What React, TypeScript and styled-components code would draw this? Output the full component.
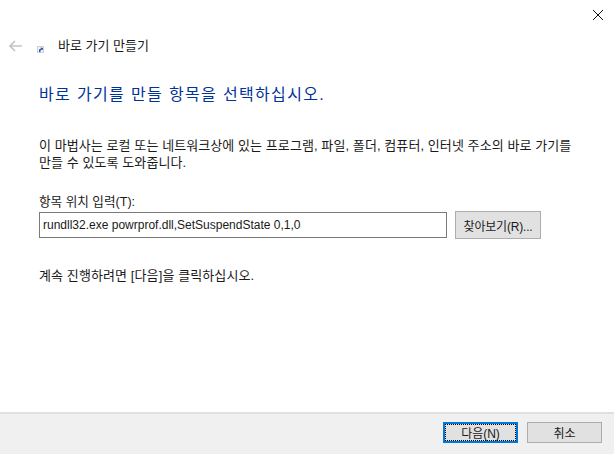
import React from "react";
import styled, { createGlobalStyle } from "styled-components";

const Global = createGlobalStyle`
  html, body { margin: 0; padding: 0; background: #fff; }
  body { font-family: "Noto Sans CJK KR", "Liberation Sans", sans-serif; }
`;
const latin = `"Liberation Sans", "Noto Sans CJK KR", sans-serif`;

const Wizard = styled.div`
  width: 614px; height: 454px; display: flex; flex-direction: column; background: #fff;
  overflow: hidden; color: #1a1a1a; font-family: ${latin}; font-size: 12px;
`;
const CloseRow = styled.div`
  height: 31px; display: flex; justify-content: flex-end; padding: 10px 11px 0 0; box-sizing: border-box;
`;
const NavRow = styled.div`
  height: 28px; display: flex; align-items: center; padding-left: 9px; padding-top: 1px; box-sizing: border-box;
`;
const BackIcon = styled.svg`width: 13px; height: 12px; margin-right: 15px;`;
const ShortcutIcon = styled.svg`width: 7px; height: 7px; margin: 7px 14px 0 0;`;
const NavTitle = styled.span`font-size: 13px; line-height: 16px;`;
const Body = styled.div`
  flex: 1; padding: 25px 0 0 39px; display: flex; flex-direction: column; align-items: flex-start;
`;
const Heading = styled.h1`
  margin: 0; font-size: 16px; font-weight: 400; line-height: 22px; color: #003399; letter-spacing: 1.35px;
`;
const Intro = styled.p`
  margin: 31px 0 0; width: 540px; font-size: 13px; line-height: 17px; letter-spacing: 0.08px;
`;
const FieldLabel = styled.label`
  margin-top: 23px; font-size: 12.6px; line-height: 16px;
`;
const FieldRow = styled.div`
  margin-top: 1px; display: flex; align-items: center; gap: 8px;
`;
const PathInput = styled.div`
  width: 408px; height: 26px; box-sizing: border-box; border: 1px solid #7a7a7a; background: #fff;
  padding: 0 3px; display: flex; align-items: center; font-size: 12px;
`;
const Button = styled.button<{ $primary?: boolean }>`
  box-sizing: border-box; padding: 0; font-family: ${latin}; font-size: 12px; color: #1a1a1a;
  background: #e1e1e1; display: flex; align-items: center; justify-content: center;
  border: ${(p) => (p.$primary ? "2px solid #0078d7" : "1px solid #adadad")};
  ${(p) => (p.$primary ? "outline: 1px dotted #000; outline-offset: -3px;" : "")}
`;
const BrowseButton = styled(Button)`width: 86px; height: 28px; letter-spacing: -0.2px;`;
const Hint = styled.p`margin: 29px 0 0; font-size: 13px; line-height: 16px; letter-spacing: 0.1px;`;
const Footer = styled.div`
  height: 42px; box-sizing: border-box; border-top: 2px solid #dfdfdf; background: #f0f0f0;
  display: flex; justify-content: flex-end; gap: 9px; padding: 8px 12px 0 0;
`;
const FooterButton = styled(Button)`width: 75px; height: 21px;`;

export default function App() {
  return (
    <Wizard>
      <Global />
      <CloseRow>
        <svg width="10" height="10" viewBox="0 0 10 10">
          <path d="M0 0L10 10M10 0L0 10" stroke="#111" strokeWidth="1" fill="none" />
        </svg>
      </CloseRow>
      <NavRow>
        <BackIcon viewBox="0 0 13 12">
          <path d="M6 1L1 6L6 11M1 6H13" stroke="#c4c4c4" strokeWidth="1.7" fill="none" />
        </BackIcon>
        <ShortcutIcon viewBox="0 0 7 7">
          <rect width="7" height="7" fill="#d0d0d0" />
          <rect x="1" y="1" width="5" height="5" fill="#f4f4f4" />
          <path d="M2 6L2 3.5L4 2.5L3.5 1.5L6 2L5.5 4.5L4.8 3.6L3.5 4.5V6Z" fill="#1f55b5" />
        </ShortcutIcon>
        <NavTitle>바로 가기 만들기</NavTitle>
      </NavRow>
      <Body>
        <Heading>바로 가기를 만들 항목을 선택하십시오.</Heading>
        <Intro>이 마법사는 로컬 또는 네트워크상에 있는 프로그램, 파일, 폴더, 컴퓨터, 인터넷 주소의 바로 가기를 만들 수 있도록 도와줍니다.</Intro>
        <FieldLabel>항목 위치 입력(T):</FieldLabel>
        <FieldRow>
          <PathInput>rundll32.exe powrprof.dll,SetSuspendState 0,1,0</PathInput>
          <BrowseButton>찾아보기(R)...</BrowseButton>
        </FieldRow>
        <Hint>계속 진행하려면 [다음]을 클릭하십시오.</Hint>
      </Body>
      <Footer>
        <FooterButton $primary>다음(N)</FooterButton>
        <FooterButton>취소</FooterButton>
      </Footer>
    </Wizard>
  );
}
